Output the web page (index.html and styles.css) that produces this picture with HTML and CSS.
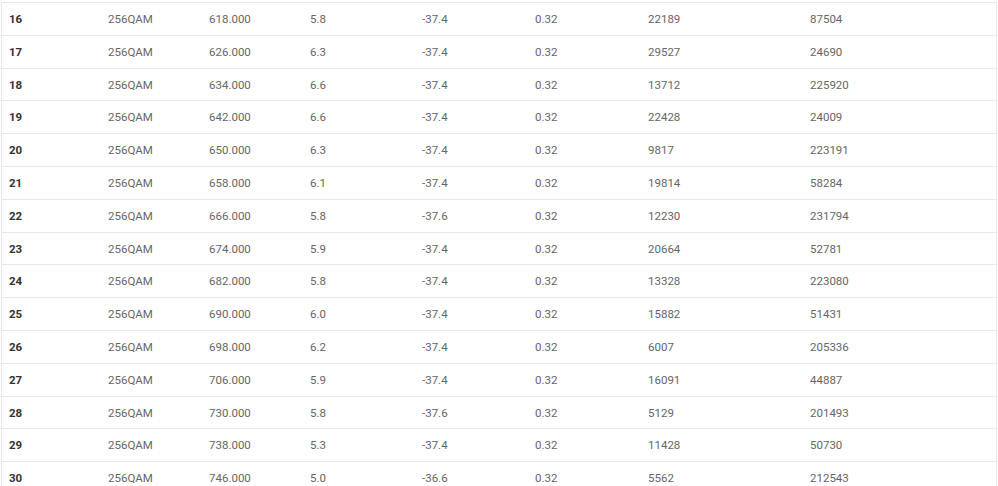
FILE: index.html
```html
<!DOCTYPE html>
<html>
<head>
<meta charset="utf-8">
<link rel="stylesheet" href="styles.css">
</head>
<body>
<div class="wrap">
<table class="grid">
<colgroup>
<col class="c1"><col class="c2"><col class="c3"><col class="c4"><col class="c5"><col class="c6"><col class="c7"><col class="c8">
</colgroup>
<tbody>
<tr><td class="idx">16</td><td>256QAM</td><td>618.000</td><td>5.8</td><td>-37.4</td><td>0.32</td><td>22189</td><td>87504</td></tr>
<tr><td class="idx">17</td><td>256QAM</td><td>626.000</td><td>6.3</td><td>-37.4</td><td>0.32</td><td>29527</td><td>24690</td></tr>
<tr><td class="idx">18</td><td>256QAM</td><td>634.000</td><td>6.6</td><td>-37.4</td><td>0.32</td><td>13712</td><td>225920</td></tr>
<tr><td class="idx">19</td><td>256QAM</td><td>642.000</td><td>6.6</td><td>-37.4</td><td>0.32</td><td>22428</td><td>24009</td></tr>
<tr><td class="idx">20</td><td>256QAM</td><td>650.000</td><td>6.3</td><td>-37.4</td><td>0.32</td><td>9817</td><td>223191</td></tr>
<tr><td class="idx">21</td><td>256QAM</td><td>658.000</td><td>6.1</td><td>-37.4</td><td>0.32</td><td>19814</td><td>58284</td></tr>
<tr><td class="idx">22</td><td>256QAM</td><td>666.000</td><td>5.8</td><td>-37.6</td><td>0.32</td><td>12230</td><td>231794</td></tr>
<tr><td class="idx">23</td><td>256QAM</td><td>674.000</td><td>5.9</td><td>-37.4</td><td>0.32</td><td>20664</td><td>52781</td></tr>
<tr><td class="idx">24</td><td>256QAM</td><td>682.000</td><td>5.8</td><td>-37.4</td><td>0.32</td><td>13328</td><td>223080</td></tr>
<tr><td class="idx">25</td><td>256QAM</td><td>690.000</td><td>6.0</td><td>-37.4</td><td>0.32</td><td>15882</td><td>51431</td></tr>
<tr><td class="idx">26</td><td>256QAM</td><td>698.000</td><td>6.2</td><td>-37.4</td><td>0.32</td><td>6007</td><td>205336</td></tr>
<tr><td class="idx">27</td><td>256QAM</td><td>706.000</td><td>5.9</td><td>-37.4</td><td>0.32</td><td>16091</td><td>44887</td></tr>
<tr><td class="idx">28</td><td>256QAM</td><td>730.000</td><td>5.8</td><td>-37.6</td><td>0.32</td><td>5129</td><td>201493</td></tr>
<tr><td class="idx">29</td><td>256QAM</td><td>738.000</td><td>5.3</td><td>-37.4</td><td>0.32</td><td>11428</td><td>50730</td></tr>
<tr><td class="idx">30</td><td>256QAM</td><td>746.000</td><td>5.0</td><td>-36.6</td><td>0.32</td><td>5562</td><td>212543</td></tr>
</tbody>
</table>
</div>
</body>
</html>
```
FILE: styles.css
```css
html, body {
  margin: 0;
  padding: 0;
  background: #fff;
}
.wrap {
  margin: 2px 0 0 1px;
  width: 996px;
  box-sizing: border-box;
  border-left: 1px solid #e8e8e8;
  border-right: 1px solid #e8e8e8;
}
.grid {
  width: 100%;
  table-layout: fixed;
  border-collapse: separate;
  border-spacing: 0;
  font-family: Roboto, "Noto Sans", sans-serif;
  font-size: 11.5px;
  color: #666;
}
.c1 { width: 99px; }
.c2 { width: 101px; }
.c3 { width: 101px; }
.c4 { width: 112px; }
.c5 { width: 113px; }
.c6 { width: 113px; }
.c7 { width: 162px; }
.grid td {
  border-top: 1px solid #e8e8e8;
  padding: 7px 8px 6.8px 7px;
  line-height: 18px;
  white-space: nowrap;
  text-align: left;
  vertical-align: middle;
}
.grid td.idx {
  font-weight: 700;
  color: #333;
}
```
